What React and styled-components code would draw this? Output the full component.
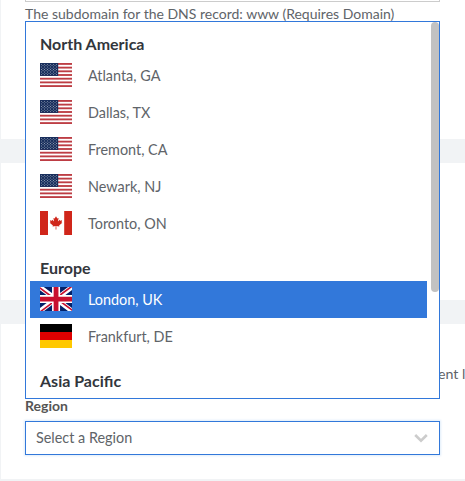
import React from "react";
import styled, { createGlobalStyle } from "styled-components";

const GlobalStyle = createGlobalStyle`
  *, *::before, *::after { box-sizing: border-box; }
  body {
    margin: 0;
    background: #f1f3f5;
    font-family: Lato, "Open Sans", sans-serif;
    font-size: 15px;
    color: #606469;
    overflow: hidden;
  }
`;

const Page = styled.main`
  display: flex;
  flex-direction: column;
  gap: 24px;
  width: 465px;
  height: 481px;
  padding: 0 0 2px 1px;
  overflow: hidden;
`;

const Panel = styled.section`
  flex: 0 0 ${(p) => p.$height}px;
  padding: 0 25px 0 24px;
  background: #fff;
`;

const InputEdge = styled.div`
  height: 2px;
  border: 1px solid #ccc;
  border-top: 0;
`;

const HelperText = styled.p`
  margin: 2px 0 0;
  font-size: 14px;
  line-height: 19px;
  white-space: nowrap;
`;

const Notice = styled.p`
  margin: 0 -25px 0 413px;
  padding-top: 41px;
  font-size: 14.2px;
  line-height: 18px;
  white-space: nowrap;
`;

const Field = styled.div`
  position: relative;
  padding-top: 14px;
`;

const Label = styled.label`
  display: block;
  height: 24px;
  font-size: 14px;
  font-weight: 700;
  line-height: 18px;
  color: #555;
`;

const Control = styled.div`
  display: flex;
  align-items: center;
  justify-content: space-between;
  height: 34px;
  padding: 0 10px 1px;
  border: 1px solid #3278da;
  background: #fff;
  box-shadow: 0 0 2px 1px #e1edfa;
  font-size: 14.4px;
`;

const Menu = styled.div`
  position: absolute;
  bottom: 56px;
  left: 0;
  display: flex;
  width: 415px;
  height: 378px;
  border: 1px solid #3278da;
  background: #fff;
  overflow: hidden;
`;

const Groups = styled.div`
  flex: 1;
  margin: -4px 4px 0;
`;

const GroupTitle = styled.h2`
  margin: 0;
  height: 39px;
  padding: 16px 10px 3px;
  font-size: 16px;
  font-weight: 700;
  line-height: 20px;
  color: #32363c;
`;

const Option = styled.div`
  display: flex;
  align-items: center;
  gap: 16px;
  height: 37px;
  padding: 0 10px;
  font-size: 14.4px;
  color: ${(p) => (p.$active ? "#fff" : "#606469")};
  background: ${(p) => (p.$active ? "#3278da" : "transparent")};
`;

const FlagSvg = styled.svg`
  display: block;
  flex: none;
  width: 32px;
  height: 24px;
  margin-bottom: 1px;
`;

const Thumb = styled.div`
  width: 8px;
  height: 270px;
  border-radius: 4px;
  background: #c2c2c2;
`;

const stars = [];
for (let row = 0; row < 9; row += 1) {
  const count = row % 2 ? 5 : 6;
  for (let i = 0; i < count; i += 1) {
    stars.push([1.5 + i * 3 + (row % 2 ? 1.5 : 0), 1.3 + row * 1.29]);
  }
}

const UsFlag = () => (
  <FlagSvg viewBox="0 0 32 24">
    <rect width="32" height="24" fill="#fff" />
    {Array.from({ length: 7 }, (_, i) => (
      <rect key={i} y={(i * 48) / 13} width="32" height={24 / 13} fill="#bd3d44" />
    ))}
    <rect width="18.2" height={(24 * 7) / 13} fill="#192f5d" />
    {stars.map(([x, y], i) => (
      <circle key={i} cx={x} cy={y} r="0.42" fill="#fff" />
    ))}
  </FlagSvg>
);

const CaFlag = () => (
  <FlagSvg viewBox="0 0 32 24">
    <rect width="32" height="24" fill="#fff" />
    <path d="M0 0h8v24H0zM24.2 0H32v24h-7.8z" fill="#d0261a" />
    <path
      d="M16 5.2l-1.3 2.4-1.3-.7.7 3.7-1.8-1.9-.4 1-2-.4.6 2.1-.8.4 3.2 2.7-.3 1.1 3.1-.5-.1 3.4h.8l-.1-3.4 3.1.5-.3-1.1 3.2-2.7-.8-.4.6-2.1-2 .4-.4-1-1.8 1.9.7-3.7-1.3.7z"
      fill="#d0261a"
    />
  </FlagSvg>
);

const UkFlag = () => (
  <FlagSvg viewBox="0 0 640 480">
    <path fill="#012169" d="M0 0h640v480H0z" />
    <path
      fill="#fff"
      d="M75 0l244 181L562 0h78v62L400 241l240 178v61h-80L320 301 81 480H0v-60l239-178L0 64V0z"
    />
    <path
      fill="#c8102e"
      d="M424 281l216 159v40L369 281zM240 301l6 35L54 480H0zM640 0v3L391 191l2-44L590 0zM0 0l239 176h-60L0 42z"
    />
    <path fill="#fff" d="M241 0v480h160V0zM0 160v160h640V160z" />
    <path fill="#c8102e" d="M0 193v96h640v-96zM273 0v480h96V0z" />
  </FlagSvg>
);

const DeFlag = () => (
  <FlagSvg viewBox="0 0 32 24">
    <rect width="32" height="8" fill="#000" />
    <rect y="8" width="32" height="8" fill="#d00" />
    <rect y="16" width="32" height="8" fill="#ffc800" />
  </FlagSvg>
);

const Chevron = () => (
  <svg width="16" height="12" viewBox="0 0 16 12" fill="none">
    <path d="M2.2 3L8 8.7 13.8 3" stroke="#ccc" strokeWidth="2.6" />
  </svg>
);

const groups = [
  {
    title: "North America",
    options: [
      { name: "Atlanta, GA", Flag: UsFlag },
      { name: "Dallas, TX", Flag: UsFlag },
      { name: "Fremont, CA", Flag: UsFlag },
      { name: "Newark, NJ", Flag: UsFlag },
      { name: "Toronto, ON", Flag: CaFlag },
    ],
  },
  {
    title: "Europe",
    options: [
      { name: "London, UK", Flag: UkFlag, active: true },
      { name: "Frankfurt, DE", Flag: DeFlag },
    ],
  },
  { title: "Asia Pacific", options: [] },
];

export default function App() {
  return (
    <>
      <GlobalStyle />
      <Page>
        <Panel $height={139}>
          <InputEdge />
          <HelperText>The subdomain for the DNS record: www (Requires Domain)</HelperText>
        </Panel>
        <Panel $height={137} />
        <Panel $height={155}>
          <Notice>ent l</Notice>
          <Field>
            <Label>Region</Label>
            <Control>
              Select a Region
              <Chevron />
            </Control>
            <Menu>
              <Groups>
                {groups.map(({ title, options }) => (
                  <React.Fragment key={title}>
                    <GroupTitle>{title}</GroupTitle>
                    {options.map(({ name, Flag, active }) => (
                      <Option key={name} $active={active}>
                        <Flag />
                        {name}
                      </Option>
                    ))}
                  </React.Fragment>
                ))}
              </Groups>
              <Thumb />
            </Menu>
          </Field>
        </Panel>
      </Page>
    </>
  );
}
